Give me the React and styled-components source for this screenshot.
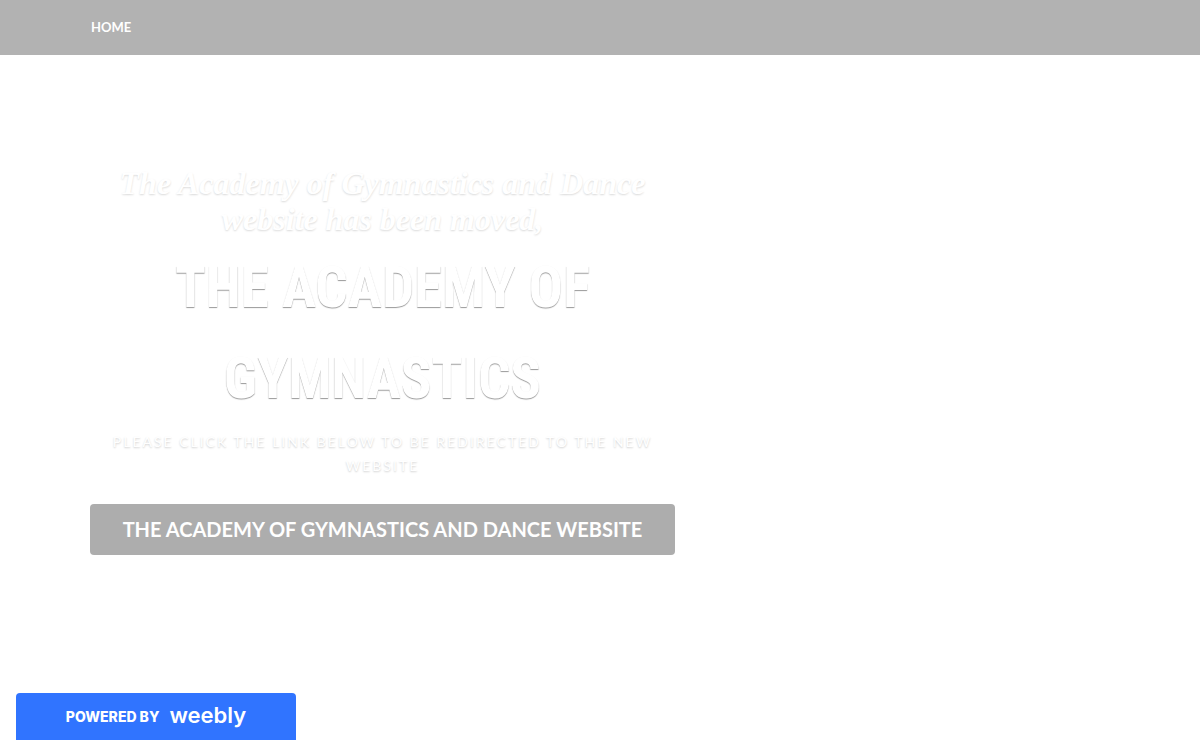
import React from 'react';
import styled, { createGlobalStyle } from 'styled-components';

const GlobalStyle = createGlobalStyle`
  * {
    box-sizing: border-box;
  }

  body {
    margin: 0;
    background-color: #fff;
    font-family: Lato, 'Liberation Sans', sans-serif;
  }
`;

const Header = styled.header`
  background-color: #b2b2b2;
`;

const Nav = styled.nav`
  display: flex;
  width: 85%;
  margin: 0 auto;
`;

const NavLink = styled.a`
  padding: 0 1px;
  font-size: 13px;
  font-weight: 700;
  line-height: 55px;
  color: #fff;
  text-decoration: none;
  text-transform: uppercase;
`;

const Banner = styled.main`
  width: 85%;
  margin: 0 auto;
  padding: 110px 0 138px;
`;

const Content = styled.div`
  display: flex;
  flex-direction: column;
  max-width: 585px;
  text-align: center;
  color: #fff;
`;

const Intro = styled.p`
  margin: 0;
  padding: 0 16px;
  font-family: 'Liberation Serif', serif;
  font-size: 32px;
  font-style: italic;
  font-weight: 700;
  line-height: 36px;
  text-shadow: 0 1px 2px rgba(0, 0, 0, 0.15);
`;

const Title = styled.h1`
  margin: 5px 0 0;
  padding: 0 64px;
  font-family: 'Roboto Condensed', Roboto, sans-serif;
  font-size: 57px;
  font-weight: 700;
  line-height: 91px;
  text-transform: uppercase;
  text-shadow: 0 1px 1px rgba(0, 0, 0, 0.4);
`;

const Tagline = styled.p`
  margin: 6px 0 26px;
  font-size: 14px;
  font-weight: 400;
  line-height: 24px;
  letter-spacing: 2px;
  text-transform: uppercase;
  text-shadow: 0 1px 2px rgba(0, 0, 0, 0.2);
`;

const ButtonLink = styled.a`
  padding: 0 16px;
  border-radius: 4px;
  background-color: #adadad;
  font-size: 20px;
  font-weight: 700;
  line-height: 51px;
  color: #fff;
  text-decoration: none;
  text-transform: uppercase;
`;

const Badge = styled.a`
  position: fixed;
  bottom: 0;
  left: 16px;
  display: flex;
  align-items: center;
  justify-content: center;
  gap: 10px;
  width: 280px;
  height: 47px;
  border-radius: 4px 4px 0 0;
  background-color: #3074ff;
  color: #fff;
  text-decoration: none;
`;

const Powered = styled.span`
  font-family: Inter, sans-serif;
  font-size: 14px;
  font-weight: 800;
  line-height: 24px;
  text-transform: uppercase;
`;

const Brand = styled.span`
  padding-bottom: 4px;
  font-family: Inter, sans-serif;
  font-size: 22px;
  font-weight: 600;
  line-height: 24px;
`;

const App = () => {
  return (
    <>
      <GlobalStyle />
      <Header>
        <Nav>
          <NavLink href="#home">Home</NavLink>
        </Nav>
      </Header>

      <Banner id="home">
        <Content>
          <Intro>The Academy of Gymnastics and Dance website has been moved,</Intro>
          <Title>The Academy of Gymnastics</Title>
          <Tagline>Please click the link below to be redirected to the new website</Tagline>
          <ButtonLink href="#website">The Academy of Gymnastics and Dance Website</ButtonLink>
        </Content>
      </Banner>

      <Badge href="#weebly">
        <Powered>Powered by</Powered>
        <Brand>weebly</Brand>
      </Badge>
    </>
  );
};

export default App;
